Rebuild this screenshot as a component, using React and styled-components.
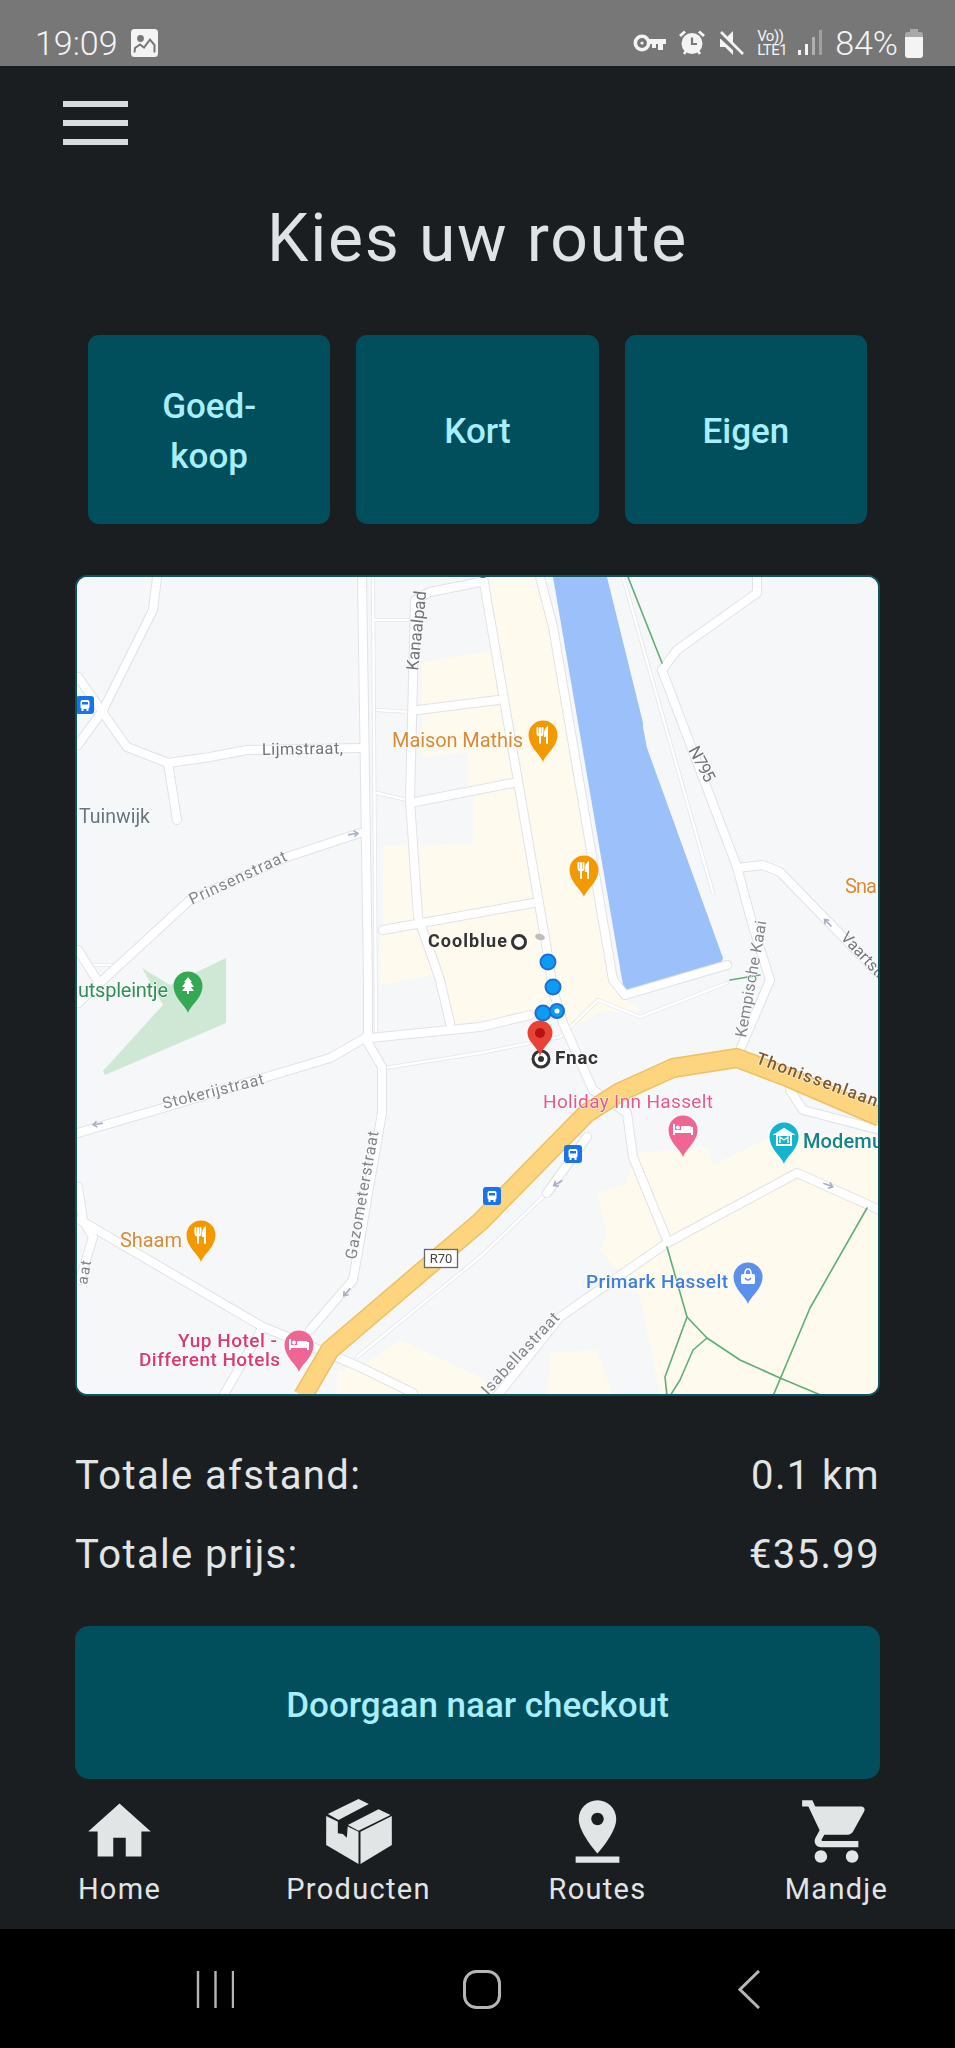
import styled, { createGlobalStyle } from 'styled-components'
import { MdHome, MdPinDrop, MdShoppingCart } from 'react-icons/md'

const GlobalStyle = createGlobalStyle`
  html, body {
    margin: 0;
    padding: 0;
    background: #1a1e20;
  }
  * {
    box-sizing: border-box;
  }
`

const Page = styled.div`
  width: 955px;
  height: 2048px;
  display: flex;
  flex-direction: column;
  background: #1a1e20;
  font-family: Roboto, "Liberation Sans", sans-serif;
  overflow: hidden;
`

const StatusBar = styled.div`
  height: 66px;
  flex: none;
  background: #777777;
  color: #f4f4f4;
  display: flex;
  align-items: center;
  padding: 20px 32px 0 35px;
  justify-content: space-between;
`

const StatusGroup = styled.div`
  display: flex;
  align-items: center;
  gap: ${p => p.$gap || 13}px;
`

const StatusText = styled.span`
  font-size: 34px;
  font-weight: 300;
  line-height: 36px;
`

const VolteText = styled.span`
  display: flex;
  flex-direction: column;
  align-items: flex-start;
  font-size: 15px;
  line-height: 14px;
  font-weight: 400;
  width: 33px;
  letter-spacing: -0.5px;
  margin-right: -5px;
`

const Header = styled.div`
  height: 110px;
  flex: none;
  display: flex;
  flex-direction: column;
  justify-content: center;
  gap: 13px;
  padding-left: 63px;
  padding-top: 4px;
`

const MenuLine = styled.span`
  display: block;
  width: 65px;
  height: 6px;
  background: #d8dcdd;
`

const Title = styled.h1`
  margin: 25px 0 58px;
  text-align: center;
  font-size: 66px;
  line-height: 76px;
  font-weight: 400;
  letter-spacing: 1.8px;
  color: #e0e3e5;
`

const Content = styled.div`
  padding: 0 75px;
`

const RouteOptions = styled.div`
  display: flex;
  gap: 26px;
  padding: 0 13px;
`

const RouteButton = styled.div`
  flex: 1;
  height: 189px;
  background: #014f5d;
  color: #a8eefc;
  border-radius: 11px;
  display: flex;
  align-items: center;
  justify-content: center;
  text-align: center;
  padding-top: 4px;
  font-size: 35px;
  line-height: 50px;
  font-weight: 500;
`

const MapFrame = styled.div`
  margin-top: 51px;
  height: 821px;
  border: 2px solid #0a5560;
  border-radius: 12px;
  overflow: hidden;
  background: #f6f7f9;
`

const MapSvg = styled.svg`
  display: block;
  width: 801px;
  height: 817px;
  font-family: Roboto, "Liberation Sans", sans-serif;
  filter: blur(0.5px);
`

const Summary = styled.div`
  margin-top: 50px;
  display: flex;
  flex-direction: column;
  gap: 19px;
`

const SummaryRow = styled.div`
  display: flex;
  justify-content: space-between;
  color: #e2e5e6;
  font-size: 40px;
  line-height: 60px;
  letter-spacing: 1.35px;
`

const CheckoutButton = styled.div`
  margin-top: 41px;
  height: 153px;
  background: #014f5d;
  color: #a8eefc;
  border-radius: 14px;
  display: flex;
  align-items: center;
  justify-content: center;
  padding-top: 5px;
  font-size: 35px;
  font-weight: 500;
`

const BottomNav = styled.div`
  height: 150px;
  flex: none;
  display: grid;
  grid-template-columns: repeat(4, 239px);
`

const NavItem = styled.div`
  display: flex;
  flex-direction: column;
  align-items: center;
  color: #e2e5e6;
  padding-top: 15px;
`

const NavIcon = styled.div`
  height: 75px;
  display: flex;
  align-items: center;
  justify-content: center;
  font-size: 75px;
  svg {
    display: block;
  }
`

const NavLabel = styled.span`
  font-size: 29px;
  line-height: 34px;
  letter-spacing: 1.3px;
  margin-top: 3px;
`

const SystemNav = styled.div`
  flex: 1;
  background: #000;
  display: grid;
  grid-template-columns: 196px 38px 229px 38px 237px 22px;
  padding-top: 41px;
  align-items: start;
`

const RecentsIcon = styled.svg`
  grid-column: 2;
`

const HomeIcon = styled.svg`
  grid-column: 4;
`

const BackIcon = styled.svg`
  grid-column: 6;
`

const Water = '#9cc0f9'

const beige = [
  '422,662 495,650 505,705 422,720',
  '422,718 506,705 515,788 468,795 468,752 422,758',
  '473,795 515,785 533,905 420,920 417,845 473,843',
  '383,845 412,845 418,925 383,930',
  '380,932 537,905 563,1010 445,1025 435,975 380,985',
  '483,577 541,577 553,627 615,990 640,1010 600,1012 570,1030 555,1010',
  '637,1153 707,1147 713,1165 770,1137 880,1133 880,1396 660,1396 640,1297 600,1250',
  '597,1193 640,1180 660,1240 613,1263',
  '550,1353 597,1350 613,1396 547,1396',
  '367,1363 400,1340 480,1377 500,1396 337,1396 337,1370',
]

const thinRoads = [
  'M375 620 L412 620',
  'M377 710 L413 712',
  'M377 793 L407 800',
  'M373 577 L376 1032',
  'M88 965 L120 965',
  'M623 577 L713 893',
  'M385 1068 L480 1053 L560 1037 L598 1000 L640 1017 L727 983',
  'M587 1137 L547 1193 L480 1257 L357 1357',
]

const roads = [
  'M362 577 L368 980 L368 1037',
  'M157 577 L153 610 L103 710 L78 745',
  'M78 677 L103 713 L127 747 L168 763 L210 757 L247 750 L363 748',
  'M168 763 L177 820',
  'M360 833 L287 857 L190 900 L103 980 L78 1003',
  'M78 950 L97 980',
  'M78 1133 L163 1108 L330 1058 L365 1038',
  'M368 1043 L382 1067 L382 1113 L357 1257 L353 1280 L310 1330',
  'M370 1038 L480 1027 L530 1015',
  'M80 1220 L263 1327 L327 1353 L360 1367 L413 1393',
  'M78 1187 L83 1220 L93 1237 L80 1280',
  'M263 1327 L223 1396',
  'M480 582 L430 592 L415 600 L410 800 L418 917 L440 980 L450 1023',
  'M418 710 L498 700',
  'M410 803 L513 783',
  'M383 930 L533 903',
  'M483 577 L547 950 L553 990 L563 1023 L593 1090 L627 1113 L633 1157 L667 1240',
  'M540 577 L553 627 L613 980 L625 995 L727 965',
  'M497 1396 L560 1317 L667 1243 L797 1173 L880 1210',
  'M790 1090 L803 1110 L880 1130',
  'M662 670 L737 867 L752 923 L770 980 L740 1050',
  'M662 670 L677 650 L757 593 L757 577',
  'M737 868 L763 865 L780 872 L880 975',
  'M547 1193 L587 1137',
]

const greens = [
  'M628 577 L662 663',
  'M730 980 L760 975',
  'M667 1247 L687 1317 L707 1338 L740 1360 L780 1378 L823 1396',
  'M687 1317 L665 1377 L667 1396',
  'M707 1338 L693 1350 L680 1380 L670 1396',
  'M867 1208 L810 1308 L773 1396',
]

const highway = 'M303 1396 L330 1350 L480 1222 L587 1113 L620 1092 L673 1068 L737 1058 L787 1077 L880 1117'

const labels = [
  { t: 'Lijmstraat,', x: 262, y: 755, s: 16.5, c: '#70757a', w: 81, r: -1 },
  { t: 'Maison Mathis', x: 392, y: 747, s: 20, c: '#d98a35', w: 131 },
  { t: 'Tuinwijk', x: 79, y: 823, s: 19.5, c: '#64757f', w: 71 },
  { t: 'Kanaalpad', x: 418, y: 671, s: 17, c: '#70757a', w: 80, r: -84 },
  { t: 'Prinsenstraat', x: 192, y: 905, s: 16, c: '#80858a', w: 106, r: -25 },
  { t: 'N795', x: 688, y: 750, s: 17, c: '#70757a', w: 38, r: 62 },
  { t: 'Kempische Kaai', x: 746, y: 1038, s: 16, c: '#80858a', w: 118, r: -80 },
  { t: 'Vaartstraat', x: 840, y: 938, s: 16, c: '#70757a', w: 80, r: 47 },
  { t: 'Sna', x: 845, y: 893, s: 20, c: '#d98a35', w: 32 },
  { t: 'Coolblue', x: 428, y: 947, s: 18, c: '#333', w: 79, b: 700 },
  { t: 'Fnac', x: 555, y: 1064, s: 19, c: '#333', w: 43, b: 700 },
  { t: 'Stokerijstraat', x: 164, y: 1109, s: 16, c: '#80858a', w: 104, r: -14 },
  { t: 'Gazometerstraat', x: 356, y: 1260, s: 16, c: '#80858a', w: 130, r: -80 },
  { t: 'utspleintje', x: 78, y: 997, s: 20, c: '#2f8f56', w: 90 },
  { t: 'Shaam', x: 120, y: 1247, s: 20, c: '#d98a35', w: 62 },
  { t: 'Yup Hotel -', x: 178, y: 1347, s: 19, c: '#d93a76', w: 99, b: 500 },
  { t: 'Different Hotels', x: 139, y: 1366, s: 19, c: '#d93a76', w: 141, b: 500 },
  { t: 'Holiday Inn Hasselt', x: 543, y: 1108, s: 19, c: '#e8588a', w: 170 },
  { t: 'Modemu', x: 803, y: 1148, s: 20, c: '#14848c', w: 80, b: 500 },
  { t: 'Primark Hasselt', x: 586, y: 1288, s: 19, c: '#3d7ee0', w: 142, b: 500 },
  { t: 'Thonissenlaan', x: 755, y: 1063, s: 17, c: '#7d5a2e', w: 128, r: 20, b: 500 },
  { t: 'Isabellastraat', x: 488, y: 1396, s: 16, c: '#80858a', w: 106, r: -47 },
  { t: 'aat', x: 87, y: 1285, s: 15, c: '#80858a', w: 24, r: -80 },
]

const pinPath = 'M0 27 C-2 20 -14.5 12 -14.5 0 A14.5 14.5 0 1 1 14.5 0 C14.5 12 2 20 0 27Z'

function FoodGlyph () {
  return (
    <g stroke="#fff" strokeWidth="2" fill="none" strokeLinecap="round">
      <path d="M-5.5 -7 L-5.5 -2 Q-5.5 0.5 -3 0.5 Q-0.5 0.5 -0.5 -2 L-0.5 -7 M-3 -7 L-3 8" />
      <path d="M4 8 L4 -7 Q1.8 -5 1.8 1 L4 1" fill="#fff" />
    </g>
  )
}

function BedGlyph () {
  return (
    <g fill="#fff">
      <rect x="-10" y="-6" width="2" height="11" />
      <rect x="-8" y="0" width="18" height="3" />
      <rect x="8" y="-3" width="2" height="8" />
      <rect x="-2" y="-4" width="10" height="4" rx="1" />
      <circle cx="-5" cy="-2.5" r="2" />
    </g>
  )
}

function TreeGlyph () {
  return <path d="M0 -9 L4 -4 L2.5 -4 L6 1 L3 1 L6 5 L1 5 L1 8 L-1 8 L-1 5 L-6 5 L-3 1 L-6 1 L-2.5 -4 L-4 -4Z" fill="#fff" />
}

function MuseumGlyph () {
  return (
    <g fill="none" stroke="#fff" strokeWidth="2">
      <path d="M-8 -3 L0 -8 L8 -3 Z" fill="#fff" />
      <rect x="-7" y="-2" width="14" height="10" />
      <path d="M-4 6 L-4 0 L0 3 L4 0 L4 6" strokeWidth="1.3" />
    </g>
  )
}

function BagGlyph () {
  return (
    <g>
      <rect x="-7" y="-3" width="14" height="10" rx="1.5" fill="#fff" />
      <path d="M-3 -3 Q-3 -8 0 -8 Q3 -8 3 -3" fill="none" stroke="#fff" strokeWidth="1.6" />
      <path d="M-3 1 Q0 5 3 1" fill="none" stroke="#5b90ec" strokeWidth="1.5" />
    </g>
  )
}

const pins = [
  { x: 543, y: 735, c: '#f29900', G: FoodGlyph },
  { x: 584, y: 870, c: '#f29900', G: FoodGlyph },
  { x: 201, y: 1235, c: '#f29900', G: FoodGlyph },
  { x: 188, y: 986, c: '#34a853', G: TreeGlyph },
  { x: 299, y: 1345, c: '#ef6695', G: BedGlyph },
  { x: 683, y: 1130, c: '#ef6695', G: BedGlyph },
  { x: 784, y: 1137, c: '#12b5cb', G: MuseumGlyph },
  { x: 748, y: 1277, c: '#5b90ec', G: BagGlyph },
]

const busStops = [
  { x: 76, y: 696 },
  { x: 564, y: 1145 },
  { x: 483, y: 1187 },
]

const arrows = [
  { x: 353, y: 834, r: -10 },
  { x: 828, y: 923, r: 225 },
  { x: 98, y: 1124, r: 170 },
  { x: 347, y: 1292, r: 130 },
  { x: 558, y: 1183, r: 150 },
  { x: 828, y: 1185, r: 20 },
]

const routeDots = [
  { x: 548, y: 962 },
  { x: 553, y: 987 },
  { x: 543, y: 1013 },
]

function RouteMap () {
  return (
    <MapSvg viewBox="77 577 801 817">
      <rect x="77" y="577" width="801" height="817" fill="#f6f7f9" />
      {beige.map(p => <polygon key={p} points={p} fill="#fefaee" />)}
      <polygon points="226,958 226,1023 105,1075 103,1071 163,1005 142,968 170,985" fill="#cfe8d5" />
      <polygon points="553,577 607,577 643,723 643,727 647,748 723,958 720,967 627,990 623,985" fill={Water} />

      <g fill="none" strokeLinejoin="round" strokeLinecap="round">
        {thinRoads.map(d => <path key={d} d={d} stroke="#e3e5e8" strokeWidth="4" />)}
        {thinRoads.map(d => <path key={d} d={d} stroke="#fff" strokeWidth="2.5" />)}
        {roads.map(d => <path key={d} d={d} stroke="#e0e2e6" strokeWidth="10" />)}
        {roads.map(d => <path key={d} d={d} stroke="#fff" strokeWidth="8" />)}
        {greens.map(d => <path key={d} d={d} stroke="#5fae76" strokeWidth="1.6" />)}
        <path d={highway} stroke="#eec062" strokeWidth="20" strokeLinecap="butt" />
        <path d={highway} stroke="#fdd57f" strokeWidth="17" strokeLinecap="butt" />
      </g>

      {arrows.map(a => (
        <path
          key={a.x + '-' + a.y}
          d="M-5 0 L4 0 M1 -3 L5 0 L1 3"
          transform={`translate(${a.x} ${a.y}) rotate(${a.r})`}
          fill="none"
          stroke="#a9aec8"
          strokeWidth="1.6"
        />
      ))}

      <g>
        <rect x="424.5" y="1249.5" width="33" height="18" fill="#fff" stroke="#666" strokeWidth="1.3" />
        <text x="441" y="1263" fontSize="13" textAnchor="middle" fill="#444">R70</text>
      </g>

      {labels.map(l => (
        <text
          key={l.t}
          x={l.x}
          y={l.y}
          fontSize={l.s}
          fill={l.c}
          fontWeight={l.b || 400}
          textLength={l.w}
          lengthAdjust="spacing"
          transform={l.r ? `rotate(${l.r} ${l.x} ${l.y})` : undefined}
          stroke="#fff"
          strokeOpacity="0.7"
          strokeWidth="1.5"
          paintOrder="stroke"
        >
          {l.t}
        </text>
      ))}

      {pins.map(p => (
        <g key={p.x} transform={`translate(${p.x} ${p.y})`}>
          <path d={pinPath} fill={p.c} />
          <p.G />
        </g>
      ))}

      {busStops.map(b => (
        <g key={b.x} transform={`translate(${b.x} ${b.y})`}>
          <rect width="18" height="18" rx="3" fill="#1a73e8" />
          <rect x="4.5" y="4" width="9" height="9" rx="2" fill="#fff" />
          <rect x="6" y="6" width="6" height="2.5" fill="#1a73e8" />
          <rect x="5.5" y="13" width="2" height="2" fill="#fff" />
          <rect x="10.5" y="13" width="2" height="2" fill="#fff" />
        </g>
      ))}

      <ellipse cx="540" cy="937" rx="5" ry="3" fill="#bdbdbd" transform="rotate(15 540 937)" />
      <circle cx="519" cy="942" r="6.5" fill="#fff" stroke="#333" strokeWidth="3" />
      <circle cx="483" cy="571" r="6" fill="#0c9cf5" stroke="#1a6fd4" strokeWidth="2" />
      {routeDots.map(d => (
        <circle key={d.y} cx={d.x} cy={d.y} r="7.5" fill="#0c9cf5" stroke="#1a6fd4" strokeWidth="2" />
      ))}
      <circle cx="557" cy="1011" r="7" fill="#0c9cf5" stroke="#1a6fd4" strokeWidth="2" />
      <circle cx="557" cy="1011" r="2.5" fill="#fff" />
      <circle cx="541" cy="1059" r="8" fill="#fff" stroke="#333" strokeWidth="3" />
      <circle cx="541" cy="1059" r="3" fill="#333" />
      <path d="M540 1056 C538 1047 527.5 1042 527.5 1033 A12.5 12.5 0 1 1 552.5 1033 C552.5 1042 542 1047 540 1056Z" fill="#ea4335" />
      <circle cx="540" cy="1033" r="5" fill="#b31412" />
    </MapSvg>
  )
}

function ImageGlyph () {
  return (
    <svg width="27" height="28" viewBox="0 0 27 28">
      <rect width="27" height="28" rx="3.5" fill="#f4f4f4" />
      <circle cx="9.500" cy="9.500" r="3.4" fill="#777" />
      <path d="M3.500 23.500 L4 19 L9 15.500 L13 18.500 L19 10.500 L23.500 16 L23.500 23.500" fill="none" stroke="#777" strokeWidth="2" />
    </svg>
  )
}

function KeyGlyph () {
  return (
    <svg width="33" height="18" viewBox="0 0 33 18">
      <circle cx="9" cy="9" r="6.7" fill="none" stroke="#f4f4f4" strokeWidth="3.6" />
      <circle cx="9" cy="9" r="1.6" fill="#f4f4f4" />
      <path d="M15 5 H33 V10 H30 V16 H25 V10 H23 V14 H19 V10 H15 Z" fill="#f4f4f4" />
    </svg>
  )
}

function AlarmGlyph () {
  return (
    <svg width="26" height="26" viewBox="0 0 26 26">
      <path d="M1 6 L6 1.500 M25 6 L20 1.500" stroke="#f4f4f4" strokeWidth="3" />
      <path d="M5 24 L7 21 M21 24 L19 21" stroke="#f4f4f4" strokeWidth="2.5" />
      <circle cx="13" cy="13.5" r="10.5" fill="#f4f4f4" />
      <path d="M13 7.500 V14 H18" fill="none" stroke="#777" strokeWidth="2.2" />
    </svg>
  )
}

function MuteGlyph () {
  return (
    <svg width="26" height="26" viewBox="0 0 26 26">
      <path d="M2 9 H7 L15 1 V25 L7 17 H2 Z" fill="#f4f4f4" />
      <path d="M1 4 L25 26" stroke="#777" strokeWidth="5" />
      <path d="M3 2 L25 24" stroke="#f4f4f4" strokeWidth="2.6" />
    </svg>
  )
}

function SignalGlyph () {
  return (
    <svg width="24" height="26" viewBox="0 0 24 26">
      <rect x="0" y="20" width="3" height="5" fill="#f4f4f4" />
      <rect x="7" y="14" width="3" height="11" fill="#f4f4f4" />
      <rect x="14" y="7" width="3" height="18" fill="#b0b0b0" />
      <rect x="21" y="0" width="3" height="25" fill="#a0a0a0" />
    </svg>
  )
}

function BatteryGlyph () {
  return (
    <svg width="18" height="29" viewBox="0 0 18 29">
      <path d="M5 0 H13 V3 H15.500 Q18 3 18 6 V9 H0 V6 Q0 3 2.500 3 H5 Z" fill="#a8a8a8" />
      <path d="M0 8 H18 V26 Q18 29 15 29 H3 Q0 29 0 26 Z" fill="#f4f4f4" />
    </svg>
  )
}

function BoxGlyph () {
  return (
    <svg width="66" height="65" viewBox="75 27 197 195">
      <path d="M75 78 L172 125 V222 L75 165 Z" fill="#e2e5e6" />
      <path d="M178 125 L272 78 V165 L178 222 Z" fill="#e2e5e6" />
      <path d="M80 72 L172 27 L203 42 L112 90 Z" fill="#e2e5e6" />
      <path d="M140 105 L232 58 L268 75 L172 122 Z" fill="#e2e5e6" />
      <path d="M110 90 L140 105 L137 143 L125 132 L110 130 Z" fill="#1a1e20" />
    </svg>
  )
}

export default function App () {
  return (
    <Page>
      <GlobalStyle />
      <StatusBar>
        <StatusGroup>
          <StatusText>19:09</StatusText>
          <ImageGlyph />
        </StatusGroup>
        <StatusGroup $gap={13}>
          <KeyGlyph />
          <AlarmGlyph />
          <MuteGlyph />
          <VolteText>
            <span>Vo))</span>
            <span>LTE1</span>
          </VolteText>
          <SignalGlyph />
          <StatusGroup $gap={7}>
            <StatusText>84%</StatusText>
            <BatteryGlyph />
          </StatusGroup>
        </StatusGroup>
      </StatusBar>

      <Header>
        <MenuLine />
        <MenuLine />
        <MenuLine />
      </Header>

      <Title>Kies uw route</Title>

      <Content>
        <RouteOptions>
          <RouteButton>Goed-<br />koop</RouteButton>
          <RouteButton>Kort</RouteButton>
          <RouteButton>Eigen</RouteButton>
        </RouteOptions>

        <MapFrame>
          <RouteMap />
        </MapFrame>

        <Summary>
          <SummaryRow>
            <span>Totale afstand:</span>
            <span>0.1 km</span>
          </SummaryRow>
          <SummaryRow>
            <span>Totale prijs:</span>
            <span>€35.99</span>
          </SummaryRow>
        </Summary>

        <CheckoutButton>Doorgaan naar checkout</CheckoutButton>
      </Content>

      <BottomNav>
        <NavItem>
          <NavIcon><MdHome /></NavIcon>
          <NavLabel>Home</NavLabel>
        </NavItem>
        <NavItem>
          <NavIcon><BoxGlyph /></NavIcon>
          <NavLabel>Producten</NavLabel>
        </NavItem>
        <NavItem>
          <NavIcon><MdPinDrop /></NavIcon>
          <NavLabel>Routes</NavLabel>
        </NavItem>
        <NavItem>
          <NavIcon><MdShoppingCart /></NavIcon>
          <NavLabel>Mandje</NavLabel>
        </NavItem>
      </BottomNav>

      <SystemNav>
        <RecentsIcon width="38" height="39" viewBox="0 0 38 39">
          <path d="M2 1 V38 M19.500 1 V38 M37 1 V38" stroke="#b5b5b5" strokeWidth="2.4" />
        </RecentsIcon>
        <HomeIcon width="38" height="39" viewBox="0 0 38 39">
          <rect x="1.500" y="1.500" width="35" height="36" rx="12" fill="none" stroke="#b5b5b5" strokeWidth="3" />
        </HomeIcon>
        <BackIcon width="22" height="39" viewBox="0 0 22 39">
          <path d="M21 1 L2 19.500 L21 38" fill="none" stroke="#b5b5b5" strokeWidth="3" />
        </BackIcon>
      </SystemNav>
    </Page>
  )
}
